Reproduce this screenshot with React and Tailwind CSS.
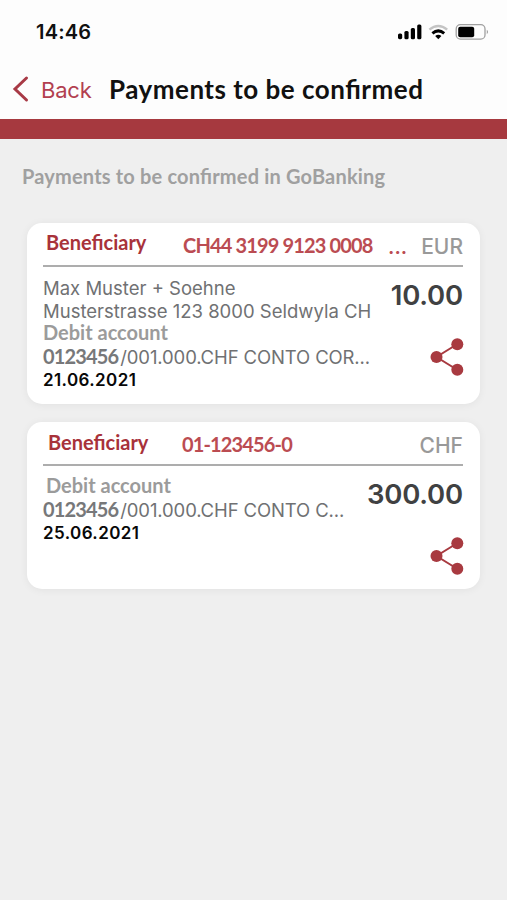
import React from "react";

const payments = [
  {
    id: 1,
    iban: "CH44 3199 9123 0008",
    more: true,
    currency: "EUR",
    amount: "10.00",
    address: ["Max Muster + Soehne", "Musterstrasse 123 8000 Seldwyla CH"],
    account: "0123456",
    accountName: "/001.000.CHF CONTO COR...",
    date: "21.06.2021",
  },
  {
    id: 2,
    iban: "01-123456-0",
    more: false,
    currency: "CHF",
    amount: "300.00",
    address: [],
    account: "0123456",
    accountName: "/001.000.CHF CONTO C...",
    date: "25.06.2021",
  },
];

function StatusBar() {
  return (
    <div className="h-[59px] flex items-start justify-between pl-[36px] pr-[18px]">
      <span className="mt-[18px] text-[20px] leading-[28px] font-semibold tracking-[0.2px] text-[#111]">14:46</span>
      <svg className="mt-[20px]" width="92" height="24" viewBox="397 20 92 24" fill="none">
        <g fill="#000">
          <rect x="398" y="33.5" width="4.2" height="5.7" rx="1.6" />
          <rect x="404.4" y="31" width="4.2" height="8.2" rx="1.5" />
          <rect x="410.8" y="28" width="4.2" height="11.2" rx="1.5" />
          <rect x="417.2" y="24.6" width="4.2" height="14.6" rx="1.5" />
        </g>
        <path d="M429.4 29.6Q438.3 22.2 447.2 29.6" stroke="#c4c4c4" strokeWidth="2.4" />
        <path d="M432.4 33.3Q438.3 28.4 444.2 33.3" stroke="#000" strokeWidth="3" />
        <path d="M435.2 36Q438.3 33.4 441.4 36L438.3 39.2Z" fill="#000" />
        <rect x="456.2" y="24.7" width="28.8" height="14.4" rx="4.2" stroke="#a0a0a0" strokeWidth="1.3" />
        <rect x="458.2" y="26.8" width="16" height="10.4" rx="2" fill="#000" />
        <path d="M486.8 29.8Q489 32 486.8 34.2Z" fill="#8f8f8f" />
      </svg>
    </div>
  );
}

function ShareIcon() {
  return (
    <svg width="34" height="38" viewBox="0 0 34 38" className="shrink-0">
      <path d="M27.5 6L6.5 19L27.5 32" fill="none" stroke="#a83a40" strokeWidth="2" />
      <g fill="#a83a40">
        <circle cx="27.3" cy="6.2" r="6" />
        <circle cx="6.5" cy="19" r="6" />
        <circle cx="27.3" cy="31.8" r="6" />
      </g>
    </svg>
  );
}

function PaymentCard({ payment }) {
  const tall = payment.address.length > 0;
  return (
    <div
      className={`rounded-[15px] bg-white pl-[16px] pr-[17px] shadow-[0_1px_8px_rgba(0,0,0,0.06)] ${
        tall ? "h-[181px]" : "h-[167px]"
      }`}
    >
      <div className="flex h-[44px] items-start border-b-2 border-[#adadad]">
        <span
          className={`w-[137px] shrink-0 font-['Lato'] text-[20px] leading-[24px] font-bold text-[#a8323a] ${
            tall ? "pl-[3px] pt-[7px]" : "pl-[5px] pt-[8px]"
          }`}
        >
          Beneficiary
        </span>
        <span
          className={`w-[208px] shrink-0 whitespace-nowrap pt-[10px] font-['Lato'] text-[20px] leading-[24px] font-bold tracking-[-0.85px] text-[#bb4c52] ${
            tall ? "pl-[3px]" : "pl-[2px]"
          }`}
        >
          {payment.iban}
        </span>
        <span className="flex-1 pt-[10px] text-[20px] leading-[28px] font-semibold text-[#bb4c52]">
          {payment.more && "..."}
        </span>
        <span className="pt-[11px] text-[21px] leading-[26px] font-medium text-[#999]">{payment.currency}</span>
      </div>
      <div className="flex justify-between">
        <div
          className={`whitespace-nowrap text-[18.5px] text-[#707173] ${tall ? "pt-[10px]" : "pt-[9px]"}`}
        >
          {payment.address.map((line) => (
            <p key={line} className="leading-[22.5px]">{line}</p>
          ))}
          <p
            className={`font-['Lato'] text-[20px] leading-[20px] font-bold text-[#9b9b9b] ${
              tall ? "" : "pl-[3px]"
            }`}
          >
            Debit account
          </p>
          <p className="mt-[3px] leading-[23px] tracking-[-0.12px]">
            <span className="mr-[2px] font-['Lato'] text-[20px] font-bold tracking-[-0.85px] text-[#77787a]">
              {payment.account}
            </span>
            {payment.accountName}
          </p>
          <p className="text-[17px] leading-[22px] font-semibold tracking-[0.4px] text-[#080808]">{payment.date}</p>
        </div>
        <div className="flex flex-col items-end">
          <span className="pt-[11px] text-[27.5px] leading-[34px] font-semibold tracking-[-0.2px] text-[#404142]">
            {payment.amount}
          </span>
          <div className="mt-[26px] -mr-px">
            <ShareIcon />
          </div>
        </div>
      </div>
    </div>
  );
}

export default function App() {
  return (
    <div className="min-h-[900px] w-[507px] bg-[#efefef] font-['Inter',sans-serif]">
      <header className="h-[139px] border-b-[20px] border-[#a6393f] bg-[#fdfdfd]">
        <StatusBar />
        <div className="flex h-[60px] items-center pl-[12px]">
          <svg width="18" height="28" viewBox="0 0 18 28" fill="none">
            <path d="M14.5 3L3 14L14.5 25" stroke="#a83a46" strokeWidth="3" strokeLinecap="round" />
          </svg>
          <span className="ml-[11px] w-[68px] pt-px text-[22px] leading-[28px] tracking-[-0.2px] text-[#b23f50]">
            Back
          </span>
          <h1 className="whitespace-nowrap font-['Lato'] text-[26px] leading-[30px] font-bold tracking-[0.5px] text-[#111] [font-feature-settings:'liga']">
            Payments to be confirmed
          </h1>
        </div>
      </header>
      <main className="px-[27px] pt-[25px]">
        <h2 className="-ml-[5px] h-[59px] whitespace-nowrap font-['Lato'] text-[20px] leading-[24px] font-bold tracking-[0.18px] text-[#a0a0a0] [font-feature-settings:'liga']">
          Payments to be confirmed in GoBanking
        </h2>
        <div className="space-y-[18px]">
          {payments.map((payment) => (
            <PaymentCard key={payment.id} payment={payment} />
          ))}
        </div>
      </main>
    </div>
  );
}
